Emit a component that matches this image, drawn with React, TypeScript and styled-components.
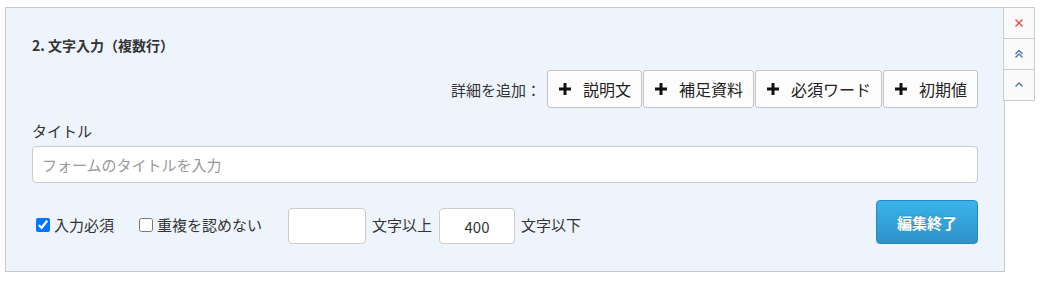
import React from "react";
import styled, { createGlobalStyle } from "styled-components";

const Global = createGlobalStyle`
  html, body { margin: 0; padding: 0; background: #ffffff; }
  body {
    font-family: "Noto Sans CJK JP", "Noto Sans", "Liberation Sans", sans-serif;
    color: #333333;
  }
  * { box-sizing: border-box; }
`;

const Page = styled.div`
  display: flex;
  align-items: flex-start;
  padding: 7px 0 0 5px;
`;

const Panel = styled.section`
  width: 1000px;
  height: 265px;
  background: #edf4fc;
  border: 1px solid #c8c8c8;
  padding: 27px 26px 27px 26px;
  display: flex;
  flex-direction: column;
`;

const Title = styled.h2`
  margin: 0;
  font-size: 14px;
  font-weight: bold;
  line-height: 20px;
  height: 20px;
  color: #333;
`;

const DetailRow = styled.div`
  margin-top: 15px;
  height: 38px;
  display: flex;
  justify-content: flex-end;
  align-items: center;
  gap: 1px;
`;

const DetailLabel = styled.span`
  font-size: 15px;
  color: #333;
  margin-right: 5px;
`;

const AddButton = styled.button`
  height: 38px;
  padding: 0 10px 0 11px;
  display: inline-flex;
  align-items: center;
  gap: 12px;
  background: #fdfdfd;
  border: 1px solid #c4c4c4;
  border-radius: 3px;
  font-family: inherit;
  font-size: 16px;
  color: #222;
  cursor: pointer;
`;

const FieldLabel = styled.div`
  margin-top: 13px;
  font-size: 15px;
  line-height: 20px;
  color: #333;
`;

const TextInput = styled.input`
  margin-top: 5px;
  height: 37px;
  width: 100%;
  border: 1px solid #cccccc;
  border-radius: 4px;
  background: #fff;
  padding: 0 9px;
  font-family: inherit;
  font-size: 15px;
  color: #333;
  outline: none;
  &::placeholder { color: #999; }
`;

const BottomRow = styled.div`
  margin-top: 17px;
  height: 44px;
  display: flex;
  align-items: flex-end;
  justify-content: space-between;
`;

const Options = styled.div`
  height: 36px;
  display: flex;
  align-items: center;
  padding-left: 4px;
`;

const CheckLabel = styled.label<{ $gapAfter: number }>`
  display: inline-flex;
  align-items: center;
  gap: 4px;
  font-size: 15px;
  color: #333;
  margin-right: ${(p) => p.$gapAfter}px;
  margin-top: -3px;
`;

const Check = styled.input`
  width: 14px;
  height: 14px;
  margin: 0;
  accent-color: #0075ff;
`;

const NumInput = styled.input<{ $w: number }>`
  width: ${(p) => p.$w}px;
  height: 36px;
  border: 1px solid #cccccc;
  border-radius: 4px;
  background: #fff;
  text-align: center;
  font-family: inherit;
  font-size: 15px;
  color: #333;
  outline: none;
`;

const Unit = styled.span<{ $gapAfter: number }>`
  font-size: 15px;
  color: #333;
  margin: -3px ${(p) => p.$gapAfter}px 0 6px;
`;

const DoneButton = styled.button`
  width: 102px;
  height: 44px;
  border: 1px solid #2b88bd;
  border-radius: 4px;
  background: linear-gradient(#38b4ea, #2e92c8);
  color: #fff;
  font-family: inherit;
  font-size: 15px;
  font-weight: bold;
  text-shadow: 0 -1px 0 rgba(0, 0, 0, 0.15);
  cursor: pointer;
`;

const SideBar = styled.div`
  display: flex;
  flex-direction: column;
  margin-left: -2px;
`;

const SideButton = styled.button`
  width: 32px;
  height: 32px;
  margin-top: -1px;
  &:first-child { margin-top: 0; }
  background: #fafafa;
  border: 1px solid #cccccc;
  display: flex;
  align-items: center;
  justify-content: center;
  padding: 0;
  cursor: pointer;
`;

const Plus = () => (
  <svg width="12" height="12" viewBox="0 0 12 12">
    <rect x="4.5" y="0" width="3" height="12" fill="#111" />
    <rect x="0" y="4.5" width="12" height="3" fill="#111" />
  </svg>
);

const CloseIcon = () => (
  <svg width="10" height="10" viewBox="0 0 10 10">
    <path d="M1.5 1.5 L8.5 8.5 M8.5 1.5 L1.5 8.5" stroke="#f2433f" strokeWidth="1.3" fill="none" />
  </svg>
);

const DoubleUp = () => (
  <svg width="10" height="10" viewBox="0 0 10 10">
    <path d="M1.5 5 L5 1.5 L8.5 5 M1.5 8.5 L5 5 L8.5 8.5" stroke="#4f75ad" strokeWidth="1.4" fill="none" />
  </svg>
);

const Up = () => (
  <svg width="10" height="10" viewBox="0 0 10 10">
    <path d="M1.5 6.5 L5 3 L8.5 6.5" stroke="#4f75ad" strokeWidth="1.4" fill="none" />
  </svg>
);

const addItems = ["説明文", "補足資料", "必須ワード", "初期値"];

export default function App() {
  return (
    <>
      <Global />
      <Page>
        <Panel>
          <Title>2. 文字入力（複数行）</Title>
          <DetailRow>
            <DetailLabel>詳細を追加：</DetailLabel>
            {addItems.map((t) => (
              <AddButton key={t}>
                <Plus />
                {t}
              </AddButton>
            ))}
          </DetailRow>
          <FieldLabel>タイトル</FieldLabel>
          <TextInput placeholder="フォームのタイトルを入力" />
          <BottomRow>
            <Options>
              <CheckLabel $gapAfter={25}>
                <Check type="checkbox" defaultChecked />
                入力必須
              </CheckLabel>
              <CheckLabel $gapAfter={26}>
                <Check type="checkbox" />
                重複を認めない
              </CheckLabel>
              <NumInput $w={78} />
              <Unit $gapAfter={7}>文字以上</Unit>
              <NumInput $w={76} defaultValue="400" />
              <Unit $gapAfter={0}>文字以下</Unit>
            </Options>
            <DoneButton>編集終了</DoneButton>
          </BottomRow>
        </Panel>
        <SideBar>
          <SideButton><CloseIcon /></SideButton>
          <SideButton><DoubleUp /></SideButton>
          <SideButton><Up /></SideButton>
        </SideBar>
      </Page>
    </>
  );
}
